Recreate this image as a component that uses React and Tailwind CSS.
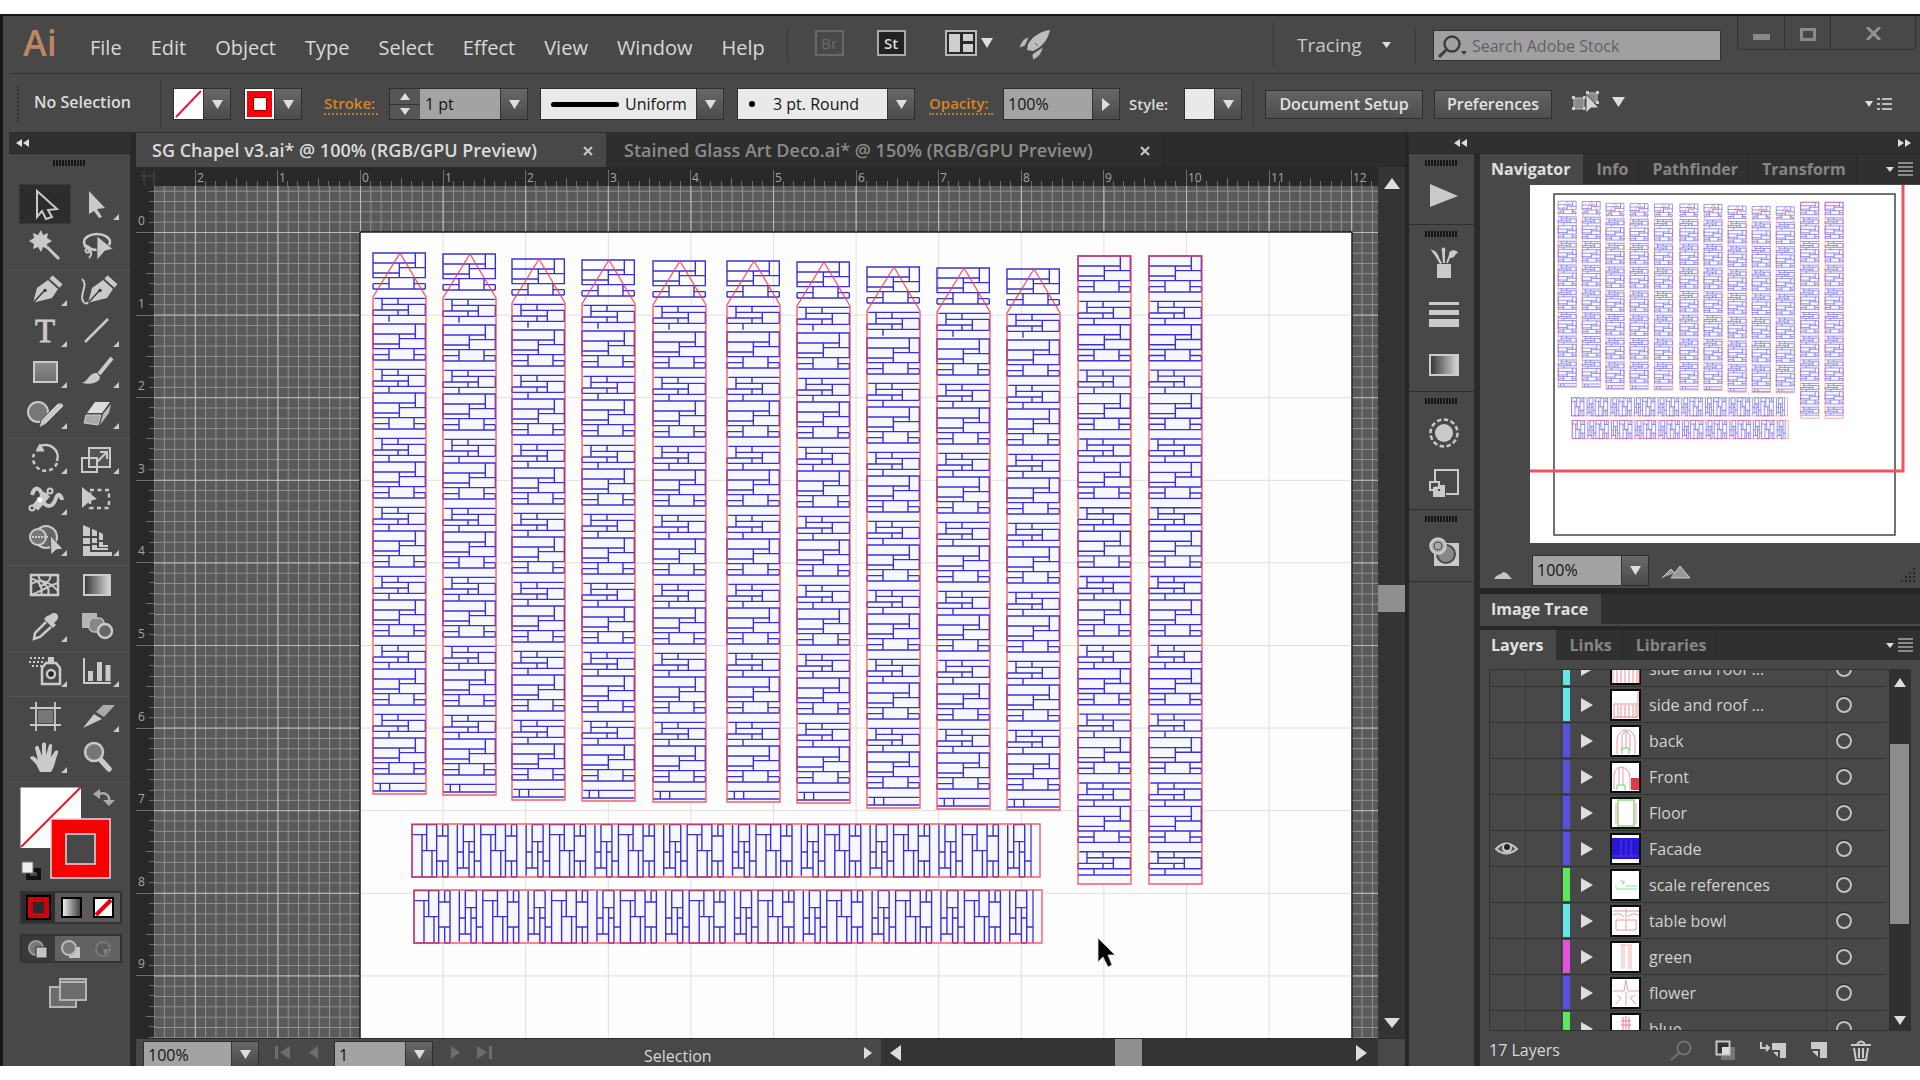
import React from "react";

/* ---------- artwork geometry ---------- */
const INCH = 82.6;

/* One repeat of the brick pattern, 157 x 207 in thirds of a pixel. */
const BRICK_TOP =
  "M0 0H157V74H0ZM127 0V44M0 30H127M79 30V74M79 44H157M0 60H79" +
  "M48 74V108M123 74V108M0 92H48M123 92H157M0 92V108M157 92V108M0 108H157";
const BRICK_LOW =
  "M4 136H157M27 136V171M75 136V154M27 154H157M106 154V187M157 154V187M0 171H106M75 171V187M0 171V187M0 187H157M48 187V206";
const BRICK_END = "M4 136H157M22 136V159M50 136V159M0 159H157";

const ROOF_COLUMNS = [
  [12, 21],
  [82, 22],
  [151, 27],
  [221, 28],
  [292, 29],
  [366, 29],
  [436, 30],
  [506, 35],
  [576, 36],
  [646, 37],
];

function Bricks({ y, end }) {
  return (
    <g transform={`translate(0 ${y}) scale(.3333)`} fill="none" stroke="#3a30d4" strokeWidth="4.2">
      <path d={BRICK_TOP} />
      <path d={end ? BRICK_END : BRICK_LOW} />
    </g>
  );
}

function RoofColumn({ x, y }) {
  return (
    <g transform={`translate(${x} ${y})`}>
      <path d="M0 44H53V541H0Z" fill="#f7f8ff" />
      <Bricks y={0} />
      {[0, 1, 2, 3, 4, 5].map((i) => (
        <Bricks key={i} y={71 + i * 69} />
      ))}
      <Bricks y={485} end />
      <path d="M27 0L0 44V541H53V44Z" fill="none" stroke="#f4434e" strokeWidth="1.4" opacity=".85" />
    </g>
  );
}

function LongColumn() {
  return (
    <g>
      <path d="M0 0H53V628H0Z" fill="#f7f8ff" />
      {[0, 1, 2, 3, 4, 5, 6, 7, 8].map((i) => (
        <Bricks key={i} y={i * 68.8} />
      ))}
      <path d="M0 619H53" stroke="#3f36d2" strokeWidth="1.3" />
      <path d="M0 0H53V628H0Z" fill="none" stroke="#f4434e" strokeWidth="1.4" opacity=".85" />
    </g>
  );
}

function Artwork() {
  return (
    <g>
      {ROOF_COLUMNS.map(([x, y]) => (
        <RoofColumn key={x} x={x} y={y} />
      ))}
      <g transform="translate(717 24)"><LongColumn /></g>
      <g transform="translate(788 24)"><LongColumn /></g>
      <g transform="translate(51 645) rotate(-90)"><LongColumn /></g>
      <g transform="translate(53 711) rotate(-90)"><LongColumn /></g>
    </g>
  );
}

function Canvas() {
  return (
    <svg className="block h-full w-full" role="img" aria-label="Artboard">
      <defs>
        <pattern id="minor" width={INCH / 8} height={INCH / 8} patternUnits="userSpaceOnUse" patternTransform="translate(206 46)">
          <path d="M0 .5H11M.5 0V11" stroke="#919191" strokeWidth="1" />
        </pattern>
        <pattern id="major" width={INCH} height={INCH} patternUnits="userSpaceOnUse" patternTransform="translate(206 46)">
          <path d="M0 .5H83M.5 0V83" stroke="#bcbcbc" strokeWidth="1" />
        </pattern>
        <pattern id="board" width={INCH} height={INCH} patternUnits="userSpaceOnUse" patternTransform="translate(206 46)">
          <path d="M0 .5H83M.5 0V83" stroke="#dedede" strokeWidth="1" />
        </pattern>
      </defs>
      <rect width="100%" height="100%" fill="#5a5a5a" />
      <rect width="100%" height="100%" fill="url(#minor)" />
      <rect width="100%" height="100%" fill="url(#major)" />
      <rect x="206" y="46" width="992" height="992" fill="#fdfdfd" stroke="#1e1e1e" strokeWidth="1.5" />
      <rect x="207" y="47" width="989" height="989" fill="url(#board)" />
      <g transform="translate(207 46)">
        <Artwork />
      </g>
      <path d="M944 752V776L949 771L954 781L958 779L954 769H961Z" fill="#050505" stroke="#ddd" strokeWidth=".8" />
    </svg>
  );
}

function HorizontalRuler() {
  const units = Array.from({ length: 15 }, (_, i) => i - 2);
  return (
    <svg className="block h-[19px] w-full bg-[#292929]">
      <path d="M4 9H18M8 3V19M18 3V19" stroke="#4d4d4d" />
      {units.map((n) => (
        <g key={n} transform={`translate(${Math.round(224 + n * INCH)} 0)`}>
          <path d="M.5 3V19M10.5 14V19M20.5 14V19M31.5 14V19M41.5 11V19M51.5 14V19M62.5 14V19M72.5 14V19" stroke="#6e6e6e" />
          <text x="2" y="15" fontSize="12" fill="#a5a5a5">{Math.abs(n)}</text>
        </g>
      ))}
    </svg>
  );
}

function VerticalRuler() {
  const units = Array.from({ length: 10 }, (_, i) => i);
  return (
    <svg className="block h-full w-[18px] shrink-0 bg-[#292929]">
      <path d="M13 5.5H18M13 15.5H18M13 25.5H18M13 36.5H18" stroke="#6e6e6e" />
      {units.map((n) => (
        <g key={n} transform={`translate(0 ${Math.round(46 + n * INCH)})`}>
          <path d="M0 .5H18M13 10.5H18M13 20.5H18M13 31.5H18M10 41.5H18M13 51.5H18M13 62.5H18M13 72.5H18" stroke="#6e6e6e" />
          <text x="2" y="-7" fontSize="12" fill="#a5a5a5">{n}</text>
        </g>
      ))}
    </svg>
  );
}

/* ---------- small shared pieces ---------- */
function Tri({ dir = "down", w = 10, h = 8, className = "" }) {
  const d = {
    down: "M0 0H10L5 8Z",
    up: "M0 8H10L5 0Z",
    left: "M10 0V8L0 4Z",
    right: "M0 0V8L10 4Z",
  }[dir];
  return (
    <svg width={w} height={h} viewBox="0 0 10 8" preserveAspectRatio="none" className={"shrink-0 fill-[#dedede] " + className}>
      <path d={d} />
    </svg>
  );
}

function Arrow({ label, dir = "down" }) {
  return (
    <button
      aria-label={label}
      className="flex h-full w-[27px] shrink-0 items-center justify-center border-l border-[#333] bg-gradient-to-b from-[#686868] to-[#4b4b4b]"
    >
      <Tri dir={dir} w={dir === "down" ? 11 : 8} h={dir === "down" ? 9 : 13} />
    </button>
  );
}

function Combo({ className, children }) {
  return <div className={"flex shrink-0 border border-[#2f2f2f] bg-[#a3a3a3] text-[#151515] " + className}>{children}</div>;
}

function Grip() {
  return (
    <svg width="34" height="6" className="mx-auto block">
      <path d="M1 0V6M4 0V6M7 0V6M10 0V6M13 0V6M16 0V6M19 0V6M22 0V6M25 0V6M28 0V6M31 0V6" stroke="#161616" strokeWidth="2" />
    </svg>
  );
}

function Chevrons({ right, label }) {
  return (
    <button aria-label={label} className="flex gap-px">
      <Tri dir={right ? "right" : "left"} w={6} h={8} className="fill-[#b5b5b5]" />
      <Tri dir={right ? "right" : "left"} w={6} h={8} className="fill-[#b5b5b5]" />
    </button>
  );
}

function PanelMenu({ label }) {
  return (
    <button aria-label={label} className="ml-auto mr-[7px] flex h-[15px] items-center gap-1 text-[#a9a9a9]">
      <Tri w={8} h={5} className="fill-[#c0c0c0]" />
      <svg width="15" height="14" stroke="currentColor" strokeWidth="1.5">
        <path d="M0 1H15M0 5H15M0 9H15M0 13H15" />
      </svg>
    </button>
  );
}

const VLine = ({ className }) => <div className={"w-px shrink-0 bg-[#383838] " + className} />;

/* ---------- top bars ---------- */
const MENUS = ["File", "Edit", "Object", "Type", "Select", "Effect", "View", "Window", "Help"];

function MenuBar() {
  return (
    <header className="flex h-[58px] shrink-0 items-center border-b border-[#333] pr-1">
      <div className="w-[81px] shrink-0 pb-1 pl-[14px] text-[36px] leading-10 font-semibold text-[#bd8660]">Ai</div>
      <nav className="flex gap-[29px] pt-[6px] text-[20px] text-[#d8d8d8]">
        {MENUS.map((m) => (
          <button key={m}>{m}</button>
        ))}
      </nav>
      <VLine className="ml-[22px] h-9" />
      <button className="mb-1 ml-[27px] h-[26px] w-[29px] border-2 border-[#686868] text-[15px] leading-5 text-[#6b6b6b]">Br</button>
      <button className="mb-1 ml-[33px] h-[26px] w-[29px] border-2 border-[#aaa] bg-[#222] text-[15px] leading-5 font-semibold text-[#ddd]">St</button>
      <button aria-label="Arrange documents" className="mb-1 ml-[39px] flex items-center gap-1">
        <svg width="32" height="26">
          <path d="M1 1H31V25H1Z" fill="#2a2a2a" stroke="#b9b9b9" strokeWidth="2" />
          <path d="M4 4H15V22H4ZM18 4H28V11H18ZM18 14H28V22H18Z" fill="#cfcfcf" />
        </svg>
        <Tri w={12} h={10} />
      </button>
      <button aria-label="GPU performance" className="ml-[26px]">
        <svg width="32" height="30" fill="#bdbdbd">
          <path d="M31 0C22 1 14 6 9 14L8 20L14 21C23 17 29 10 31 0Z" />
          <path d="M10 7C5 8 2 12 0 18L6 16ZM24 17C20 20 15 22 13 25L14 30C20 27 23 23 24 17ZM16 13L19 16" stroke="#4a4a4a" strokeWidth=".8" />
        </svg>
      </button>
      <div className="ml-auto flex h-full items-center">
        <VLine className="h-11" />
        <label className="ml-[23px] flex items-center pt-px">
          <select aria-label="Workspace" className="w-[85px] appearance-none bg-transparent text-[19px] text-[#c9c9c9]">
            <option>Tracing</option>
          </select>
          <Tri w={9} h={6} />
        </label>
        <VLine className="ml-6 h-9" />
        <div className="mt-[2px] ml-[17px] flex h-[31px] w-[288px] items-center border border-[#333] bg-[#a19fa2]">
          <svg width="36" height="28" fill="none" stroke="#3c3c3c" strokeWidth="2.4">
            <circle cx="18" cy="12" r="7.5" />
            <path d="M12 18L5 25" strokeWidth="3" />
            <path d="M27 19H33L30 23Z" fill="#3c3c3c" stroke="none" />
          </svg>
          <input aria-label="Search Adobe Stock" placeholder="Search Adobe Stock" className="w-full bg-transparent pl-[6px] text-[16px] outline-none placeholder:text-[#636066]" />
        </div>
        <div className="ml-4 flex h-[34px] self-start rounded-b border border-t-0 border-[#333]">
          <button aria-label="Minimize" className="flex w-[47px] items-center justify-center border-r border-[#333] pt-2">
            <span className="h-[6px] w-[17px] bg-[#8a8a8a]" />
          </button>
          <button aria-label="Maximize" className="flex w-[46px] items-center justify-center border-r border-[#333] pt-1">
            <span className="h-[13px] w-[16px] border-3 border-[#8a8a8a]" />
          </button>
          <button aria-label="Close" className="flex w-[84px] items-center justify-center pt-px">
            <svg width="15" height="13" stroke="#929292" strokeWidth="3"><path d="M1 0L14 13M14 0L1 13" /></svg>
          </button>
        </div>
      </div>
    </header>
  );
}

function ControlBar() {
  return (
    <div className="flex h-[59px] shrink-0 items-center border-b border-[#2c2c2c] pt-[2px] text-[15px]">
      <div className="ml-2 h-9 w-0 border-l-2 border-dotted border-[#333]" />
      <span className="ml-[15px] w-[126px] shrink-0 pb-1 text-[16px] font-semibold text-[#dcdcdc]">No Selection</span>
      <VLine className="h-12" />
      <Combo className="ml-[12px] h-8 w-[58px]">
        <button aria-label="Fill" className="flex-1 bg-white">
          <svg width="29" height="30"><path d="M2 28L27 2" stroke="#d81f3a" strokeWidth="2" /></svg>
        </button>
        <Arrow label="Fill options" />
      </Combo>
      <Combo className="ml-[13px] h-8 w-[58px]">
        <button aria-label="Stroke" className="flex flex-1 items-center justify-center border-2 border-white bg-[#f80008]">
          <span className="h-[12px] w-[12px] border-2 border-[#eee] bg-[#fff] outline outline-[#800]" />
        </button>
        <Arrow label="Stroke options" />
      </Combo>
      <a href="#stroke" className="ml-[22px] w-[54px] shrink-0 border-b-2 border-dotted border-[#c77b21] leading-5 font-semibold text-[#d98524]">Stroke:</a>
      <Combo className="ml-[11px] h-8 w-[139px]">
        <div className="flex w-[30px] shrink-0 flex-col bg-[#565656]">
          <button aria-label="Increase stroke" className="flex flex-1 items-center justify-center border-b border-[#333]"><Tri dir="up" w={10} h={7} /></button>
          <button aria-label="Decrease stroke" className="flex flex-1 items-center justify-center"><Tri w={10} h={7} /></button>
        </div>
        <input aria-label="Stroke weight" defaultValue="1 pt" className="w-full min-w-0 flex-1 bg-transparent px-[5px] text-[16px] outline-none" />
        <Arrow label="Stroke weight options" />
      </Combo>
      <Combo className="ml-[12px] h-8 w-[184px] items-center bg-[#e9e9e9]">
        <span className="ml-[10px] h-[5px] w-[68px] shrink-0 rounded-sm bg-black" />
        <select aria-label="Width profile" className="w-full min-w-0 flex-1 appearance-none pl-[6px] text-[16px]">
          <option>Uniform</option>
        </select>
        <Arrow label="Width profile options" />
      </Combo>
      <Combo className="ml-[13px] h-8 w-[178px] items-center bg-[#e9e9e9]">
        <span className="ml-[11px] h-[6px] w-[6px] shrink-0 rounded-full bg-black" />
        <select aria-label="Brush definition" className="w-full min-w-0 flex-1 appearance-none pl-[18px] text-[16px]">
          <option>3 pt. Round</option>
        </select>
        <Arrow label="Brush options" />
      </Combo>
      <a href="#opacity" className="ml-[14px] w-[64px] shrink-0 border-b-2 border-dotted border-[#c77b21] leading-5 font-semibold text-[#d98524]">Opacity:</a>
      <Combo className="ml-[10px] h-8 w-[117px]">
        <input aria-label="Opacity" defaultValue="100%" className="w-full min-w-0 flex-1 bg-transparent px-1 text-[16px] outline-none" />
        <Arrow label="Opacity options" dir="right" />
      </Combo>
      <span className="ml-[9px] w-[45px] shrink-0 font-semibold text-[#dcdcdc]">Style:</span>
      <Combo className="ml-[10px] h-8 w-[58px]">
        <button aria-label="Graphic style" className="flex-1 bg-[#e9e9e9]" />
        <Arrow label="Graphic style options" />
      </Combo>
      <VLine className="ml-[11px] h-12" />
      <button className="ml-[11px] h-[29px] w-[158px] shrink-0 border border-[#2f2f2f] bg-gradient-to-b from-[#636363] to-[#4e4e4e] text-[16px] leading-6 font-semibold text-[#e2e2e2]">Document Setup</button>
      <button className="ml-[11px] h-[29px] w-[118px] shrink-0 border border-[#2f2f2f] bg-gradient-to-b from-[#636363] to-[#4e4e4e] text-[16px] leading-6 font-semibold text-[#e2e2e2]">Preferences</button>
      <button aria-label="Select similar objects" className="ml-[19px] flex shrink-0 items-center gap-[11px] pb-1">
        <svg width="30" height="24">
          <path d="M3 8H13V19H3ZM16 3H26V12H16Z" fill="#8a8a8a" stroke="#bbb" />
          <path d="M1 6h3v3H1zM12 6h3v3h-3zM1 17h3v3H1zM12 17h3v3h-3zM15 1h3v3h-3zM25 1h3v3h-3zM25 11h3v3h-3z" fill="#cfcfcf" />
          <path d="M15 4V23L20 18L28 18Z" fill="#d5d5d5" stroke="#4a4a4a" />
        </svg>
        <Tri w={13} h={10} />
      </button>
      <button aria-label="Control panel menu" className="mr-[28px] ml-auto flex items-center gap-1">
        <Tri w={8} h={6} />
        <svg width="15" height="13" stroke="#bdbdbd" strokeWidth="2"><path d="M0 1H3M5 1H15M0 6H3M5 6H15M0 11H3M5 11H15" /></svg>
      </button>
    </div>
  );
}

/* ---------- tools ---------- */
const L = "#cacaca";
const nib = (
  <g>
    <path d="M13 32L17 17L28 9L38 18L32 27L16 31Z" fill={L} />
    <path d="M31 6L41 15" stroke={L} strokeWidth="4.5" />
    <path d="M13 32L24 20" stroke="#3d3d3d" strokeWidth="1.6" />
    <circle cx="25" cy="19.500" r="1.800" fill="#3d3d3d" />
  </g>
);

const TOOL_GROUPS = [
  [
    ["Selection", <path d="M17 6L37 24L28 25L32 32L26 34L22 26L17 32Z" fill="#2c2c2c" stroke={L} strokeWidth="2" />],
    ["Direct Selection", <path d="M17 6L33 23L25 24L30 32L27 33L22 26L17 29Z" fill={L} />, 1],
    ["Magic Wand", <g><path d="M21 4L23 9L28 7L27 12L32 15L27 18L28 23L23 21L21 26L18 21L13 23L14 18L9 15L14 12L13 7L18 9Z" fill={L} /><path d="M27 21L39 33" stroke={L} strokeWidth="3" /></g>],
    ["Lasso", <g><ellipse cx="25" cy="16" rx="13" ry="8" fill="none" stroke={L} strokeWidth="2.500" /><path d="M12 21C17 18 20 23 17 26C13 28 12 22 16 23C20 25 20 29 17 32" fill="none" stroke={L} strokeWidth="2" /><path d="M25 10L41 23L33 25L25 34Z" fill={L} stroke="#484848" strokeWidth=".8" /></g>],
  ],
  [
    ["Pen", nib, 1],
    ["Curvature", <g><g transform="translate(3 0)">{nib}</g><path d="M10 8C17 14 7 23 11 30C12 33 15 33 16 31" fill="none" stroke={L} strokeWidth="2" /></g>],
    ["Type", <text x="25" y="30" textAnchor="middle" fontSize="33" fill={L} stroke={L} strokeWidth=".8" style={{ fontFamily: "Liberation Serif" }}>T</text>, 1],
    ["Line", <path d="M13 30L36 7" stroke={L} strokeWidth="2.500" />, 1],
    ["Rectangle", <path d="M14 9H37V29H14Z" fill="url(#tg)" stroke={L} strokeWidth="2" />, 1],
    ["Paintbrush", <g><path d="M40 5L27 21" stroke={L} strokeWidth="4" /><path d="M25 20L28 24C28 30 18 32 10 30C17 28 16 20 25 20Z" fill={L} /></g>, 1],
    ["Shaper", <g><circle cx="18" cy="18" r="10" fill="#777" stroke={L} strokeWidth="2" /><path d="M42 9L44 12L26 30L19 34L21 26L38 9Z" fill={L} stroke="#484848" /></g>, 1],
    ["Eraser", <g><path d="M23 8H38L30 19H15Z" fill="#dcdcdc" /><path d="M14 21H29L26 31L12 29Z" fill="#aaa" stroke={L} /><path d="M31 20L39 10L37 19L28 31Z" fill="#bbb" /></g>, 1],
  ],
  [
    ["Rotate", <g><path d="M19 8A12 12 0 0 1 37 22" fill="none" stroke={L} strokeWidth="2.500" /><path d="M37 24A12 12 0 0 1 14 15" fill="none" stroke={L} strokeWidth="2.500" strokeDasharray="4 3" /><path d="M16 12L20 5L24 12Z" fill={L} stroke={L} /></g>, 1],
    ["Scale", <g fill="none" stroke={L} strokeWidth="2"><path d="M17 9H38V28H17Z" fill="#555" /><path d="M10 19H25V33H10Z" /><path d="M25 23L35 13M28 13H35V20" /></g>, 1],
    ["Width", <g fill="none" stroke={L}><path d="M12 15C15 4 21 9 22 16C24 30 33 28 36 18C39 10 42 19 42 20" strokeWidth="4" /><path d="M15 28L27 14" strokeWidth="8" /><path d="M13 28L30 11" strokeWidth="2" /><circle cx="12" cy="28" r="2.500" fill="#484848" strokeWidth="2" /><circle cx="30" cy="11" r="2.500" fill="#484848" strokeWidth="2" /><circle cx="20" cy="20" r="3" fill="#fff" /></g>, 1],
    ["Free Transform", <g><path d="M10 7L25 19L18 21L10 28Z" fill={L} /><path d="M18 10H37V28H18Z" fill="none" stroke={L} strokeWidth="2.500" strokeDasharray="4 3.500" /></g>],
    ["Shape Builder", <g><circle cx="26" cy="16" r="11" fill="#666" stroke={L} strokeWidth="2" /><circle cx="18" cy="16" r="8" fill="#777" stroke={L} strokeWidth="2" /><path d="M12 16H28" stroke={L} strokeWidth="2" strokeDasharray="2 1" /><path d="M30 14L43 28L36 29L31 34Z" fill={L} stroke="#484848" /></g>, 1],
    ["Perspective Grid", <g fill={L}><path d="M11 4L18 7V15H11ZM20 8L25 10V15H20ZM27 11L31 13V19H27ZM11 17H18V23H11ZM20 17H25V22H20ZM11 25H18V31H40V35H11ZM20 24H25V27H36V29H20ZM27 21H31V24H36V26H27Z" /></g>, 1],
  ],
  [
    ["Mesh", <g fill="none" stroke={L} strokeWidth="2"><path d="M11 9H38V29H11Z" strokeWidth="2.500" /><path d="M11 18C18 14 26 12 38 25M11 29C22 25 30 19 38 17M19 9C16 16 32 17 28 29M30 9C32 13 25 20 19 20M11 13C20 13 23 24 21 29" /></g>],
    ["Gradient", <path d="M12 9H38V29H12Z" fill="url(#tool-gradient)" stroke={L} strokeWidth="2" />],
    ["Eyedropper", <g><path d="M30 8C34 3 41 8 37 13L34 16L36 18L33 21L24 12L27 9Z" fill={L} /><path d="M26 15L15 26L14 32L20 30L31 20" fill="none" stroke={L} strokeWidth="2.500" /></g>, 1],
    ["Blend", <g><path d="M10 6H25V21H10Z" fill="#b5b5b5" /><rect x="17" y="11" width="15" height="14" rx="5" fill="#888" stroke="#bbb" strokeWidth="1.500" /><circle cx="33" cy="24" r="7" fill="#666" stroke={L} strokeWidth="2.500" /></g>],
  ],
  [
    ["Symbol Sprayer", <g><path d="M10 6H24M9 10H25M12 14H22" stroke={L} strokeWidth="2" strokeDasharray="2 2" /><path d="M28 5H34V10H28Z" fill={L} /><path d="M22 32V16L26 11H36L40 16V32Z" fill="none" stroke={L} strokeWidth="2.500" /><circle cx="31" cy="22" r="4" fill="#222" stroke={L} strokeWidth="2.500" /></g>, 1],
    ["Column Graph", <g fill="none" stroke={L}><path d="M12 6V31H39" strokeWidth="2" /><path d="M18.500 19V29M27.500 10V29M36 13V29" strokeWidth="5" /></g>, 1],
  ],
  [
    ["Artboard", <g fill="none" stroke={L} strokeWidth="1.800"><path d="M16 5V34M35 5V34M10 11H41M10 28H41" /><path d="M18 13H33V26H18Z" fill="#777" stroke="none" /></g>],
    ["Slice", <g fill={L}><path d="M11 31L22 17L30 22Z" /><path d="M24 15L31 8H43L32 20Z" fill="#aaa" /></g>, 1],
    ["Hand", <path d="M20 34L16 26L10 20C11 17 15 18 18 22L15 10C16 7 19 7 19 10L22 18V6C23 4 26 4 26 6V17L29 7C30 5 33 6 32 9L31 19L35 13C37 11 39 13 38 15C35 23 35 28 31 34Z" fill={L} />, 1],
    ["Zoom", <g><path d="M28 21L37 31" stroke={L} strokeWidth="5.500" strokeLinecap="round" /><circle cx="22" cy="14" r="9" fill="#777" stroke={L} strokeWidth="2.500" /></g>],
  ],
];

function Tool({ name, icon, more, active }) {
  return (
    <button aria-label={name} className={"h-[38px] w-[50px] " + (active ? "bg-[#2c2c2c] outline outline-[#3a3a3a]" : "")}>
      <svg width="50" height="38" viewBox="0 0 50 38">
        {icon}
        {more ? <path d="M47 29V35H41Z" fill={L} /> : null}
      </svg>
    </button>
  );
}

function ToolPanel() {
  return (
    <aside className="flex w-[127px] shrink-0 flex-col border-r-6 border-[#292929] bg-[#484848]">
      <svg width="0" height="0" className="absolute">
        <defs>
          <linearGradient id="tg" x2="0" y2="1"><stop stopColor="#8c8c8c" /><stop offset="1" stopColor="#707070" /></linearGradient>
          <linearGradient id="tool-gradient"><stop stopColor="#333" /><stop offset="1" stopColor="#d8d8d8" /></linearGradient>
        </defs>
      </svg>
      <div className="flex h-[21px] shrink-0 items-center border-b border-[#262626] bg-[#303030] pl-[7px]">
        <Chevrons label="Collapse tools" />
      </div>
      <div className="pt-[6px] pb-[19px]"><Grip /></div>
      {TOOL_GROUPS.map((group, g) => (
        <div key={g} className="border-b border-[#535353] pb-[3px]">
          <div className="grid grid-cols-[50px_50px] gap-x-[2px] gap-y-[3px] pb-[3px] pl-[11px]">
            {group.map(([name, icon, more]) => (
              <Tool key={name} name={name} icon={icon} more={more} active={name === "Selection"} />
            ))}
          </div>
        </div>
      ))}
      <div className="pt-[4px] pl-[11px]">
        <svg width="102" height="94" role="img" aria-label="Fill and stroke colors">
          <path d="M.5.5H61V61H.5Z" fill="#fff" />
          <path d="M1 60L61 0" stroke="#d81f26" strokeWidth="2" />
          <path d="M31 32H90V91H31Z" fill="#f80000" stroke="#ddd" strokeWidth="1.500" />
          <path d="M46 47V77H75V47Z" fill="#484848" stroke="#ddd" strokeWidth="1.500" />
          <path d="M77 8C85 4 90 8 89 14" fill="none" stroke="#aaa" strokeWidth="2.500" />
          <path d="M73 7L80 2V12ZM83 13H95L89 19Z" fill="#aaa" />
          <path d="M8 83H19V91H8Z" fill="none" stroke="#111" strokeWidth="4" />
          <path d="M2 75H13V86H2Z" fill="#eee" stroke="#777" />
        </svg>
      </div>
      <div className="mt-[10px] ml-[11px] flex h-[33px] w-[102px] shrink-0 border-2 border-[#333] bg-[#5a5a5a]">
        <button aria-label="Color" className="flex flex-1 items-center justify-center bg-[#2c2c2c]"><span className="h-[21px] w-[21px] border-5 border-[#d00010] outline-2 outline-black" /></button>
        <button aria-label="Gradient fill" className="flex flex-1 items-center justify-center"><span className="h-[21px] w-[21px] border-2 border-black bg-gradient-to-r from-[#eee] to-[#444]" /></button>
        <button aria-label="None" className="flex flex-1 items-center justify-center"><svg width="21" height="21"><path d="M1 1H20V20H1Z" fill="#fff" stroke="#000" strokeWidth="2" /><path d="M3 18L18 3" stroke="#e00010" strokeWidth="4" /></svg></button>
      </div>
      <div className="mt-[10px] ml-[11px] flex h-[29px] w-[102px] shrink-0 border-2 border-[#333] bg-[#626262]">
        <button aria-label="Draw normal" className="flex flex-1 items-center justify-center bg-[#3a3a3a]"><svg width="22" height="20"><circle cx="9" cy="9" r="7" fill="#777" stroke="#999" strokeWidth="2" /><path d="M9 8H20V19H9Z" fill="#c5c5c5" stroke="#333" /></svg></button>
        <button aria-label="Draw behind" className="flex flex-1 items-center justify-center"><svg width="22" height="20"><path d="M9 8H20V19H9Z" fill="#c5c5c5" /><circle cx="9" cy="9" r="7" fill="#777" stroke="#bbb" strokeWidth="2" /></svg></button>
        <button aria-label="Draw inside" className="flex flex-1 items-center justify-center"><svg width="22" height="20"><circle cx="10" cy="10" r="7" fill="#5a5a5a" stroke="#777" strokeWidth="2" /><path d="M10 10H16L12 16Z" fill="#808080" /></svg></button>
      </div>
      <button aria-label="Change screen mode" className="mt-[15px] ml-[40px] h-[30px] w-[38px]">
        <svg width="38" height="30" fill="#6c6c6c" stroke="#b5b5b5" strokeWidth="2"><path d="M1 9H27V29H1Z" /><path d="M11 1H37V22H11Z" /><path d="M12 4H36" /></svg>
      </button>
    </aside>
  );
}

/* ---------- document ---------- */
function CloseX({ label, className }) {
  return (
    <button aria-label={label} className={className}>
      <svg width="10" height="10" stroke="#c5c5c5" strokeWidth="2.200"><path d="M1 1L9 9M9 1L1 9" /></svg>
    </button>
  );
}

function DocumentArea() {
  return (
    <main className="flex min-w-0 flex-1 flex-col bg-[#2c2c2c]">
      <div className="flex h-[34px] shrink-0 items-center text-[18px] font-semibold whitespace-nowrap" role="tablist">
        <div className="flex h-full w-[470px] items-center bg-[#484848] pt-px pl-4">
          <button role="tab" aria-selected="true" className="w-[431px] text-left text-[#dcdcdc]">SG Chapel v3.ai* @ 100% (RGB/GPU Preview)</button>
          <CloseX label="Close SG Chapel" />
        </div>
        <div className="flex h-full w-[558px] items-center border-r border-[#242424] bg-[#2e2e2e] pt-px pl-[18px]">
          <button role="tab" aria-selected="false" className="w-[516px] text-left text-[#8b8b8b]">Stained Glass Art Deco.ai* @ 150% (RGB/GPU Preview)</button>
          <CloseX label="Close Stained Glass" />
        </div>
      </div>
      <div className="flex min-h-0 flex-1">
        <div className="flex min-w-0 flex-1 flex-col">
          <HorizontalRuler />
          <div className="flex min-h-0 flex-1">
            <VerticalRuler />
            <div className="min-w-0 flex-1"><Canvas /></div>
          </div>
        </div>
        <div className="flex w-[27px] shrink-0 flex-col items-center justify-between bg-[#343434] pt-[11px] pb-[10px]">
          <Tri dir="up" w={16} h={11} />
          <div className="mb-[10px] h-[27px] w-full bg-[#8f8f8f]" />
          <Tri w={16} h={10} />
        </div>
      </div>
      <div className="flex h-[28px] shrink-0 items-end border-t border-[#2c2c2c] bg-[#484848] text-[16px]">
        <Combo className="ml-[7px] h-[25px] w-[116px] border-b-0">
          <input aria-label="Zoom level" defaultValue="100%" className="w-full min-w-0 flex-1 bg-transparent pt-[2px] pl-1 outline-none" />
          <Arrow label="Zoom level options" />
        </Combo>
        <div className="ml-[16px] flex w-[59px] items-center justify-between self-center pr-[16px]">
          <button aria-label="First artboard"><svg width="15" height="13" fill="#6d6d6d"><path d="M0 0H3V13H0ZM15 0V13L5 6.500Z" /></svg></button>
          <button aria-label="Previous artboard"><svg width="9" height="13" fill="#6d6d6d"><path d="M9 0V13L0 6.500Z" /></svg></button>
        </div>
        <Combo className="h-[25px] w-[99px] border-b-0">
          <input aria-label="Artboard number" defaultValue="1" className="w-full min-w-0 flex-1 bg-transparent pt-[2px] pl-1 outline-none" />
          <Arrow label="Artboard options" />
        </Combo>
        <div className="ml-[18px] flex w-[56px] items-center gap-[17px] self-center">
          <button aria-label="Next artboard"><svg width="9" height="13" fill="#6d6d6d"><path d="M0 0V13L9 6.500Z" /></svg></button>
          <button aria-label="Last artboard"><svg width="15" height="13" fill="#6d6d6d"><path d="M12 0H15V13H12ZM0 0V13L10 6.500Z" /></svg></button>
        </div>
        <span className="ml-[137px] flex-none self-end leading-5 text-[#d8d8d8]">Selection</span>
        <button aria-label="Status options" className="mr-[9px] ml-[152px] self-center"><Tri dir="right" w={8} h={12} /></button>
        <div className="flex h-full min-w-0 flex-1 items-center justify-between bg-[#343434] pr-[11px] pl-[9px]">
          <Tri dir="left" w={11} h={16} />
          <div className="h-full w-[27px] bg-[#8f8f8f]" />
          <Tri dir="right" w={11} h={16} />
        </div>
        <div className="w-[27px] shrink-0" />
      </div>
    </main>
  );
}

/* ---------- icon dock ---------- */
const DOCK = [
  { h: "h-[71px]", pad: "pt-[2px]", items: [["Actions", <path d="M4 6L32 18L4 29Z" fill={L} />]] },
  {
    h: "h-[167px]",
    pad: "pb-px",
    items: [
      ["Brushes", <g fill={L}><path d="M11 19H25V33H11Z" /><path d="M14 19L8 9C4 5 5 3 6 5C12 6 12 12 16 18ZM17 18L16 7C14 1 21 1 19 7L19 18ZM20 18L23 10C22 4 31 4 32 8C28 9 30 13 24 13L22 18Z" /></g>],
      ["Stroke", <path d="M3 6H33V9H3ZM3 14H33V19H3ZM3 23H33V31H3Z" fill={L} />],
      ["Gradient", <path d="M4 8H32V28H4Z" fill="url(#tool-gradient)" stroke={L} strokeWidth="2" />],
    ],
  },
  {
    h: "h-[118px]",
    pad: "pt-[3px]",
    items: [
      ["Appearance", <g><circle cx="18" cy="18" r="9" fill={L} /><circle cx="18" cy="18" r="13.500" fill="none" stroke={L} strokeWidth="2.500" strokeDasharray="4.500 2.500" /></g>],
      ["Graphic Styles", <g fill="none" stroke={L} strokeWidth="2"><path d="M9 15V4H32V28H20" /><path d="M4 16H13V24H4Z" /><path d="M8 21V30H18V20H14" fill={L} /><path d="M11 22H15V26H11Z" fill="#484848" /></g>],
    ],
  },
  {
    h: "h-[72px]",
    pad: "pb-px",
    items: [["Symbols", <g><path d="M8 10H33V33H8Z" fill={L} /><circle cx="20" cy="21" r="9" fill="#888" stroke="#484848" strokeWidth="2" /><circle cx="12" cy="13" r="7.500" fill="#aaa" stroke={L} strokeWidth="2.500" /><circle cx="12" cy="13" r="4" fill="none" stroke="#484848" /></g>]],
  },
];

function IconDock() {
  return (
    <div className="flex w-[65px] shrink-0 flex-col">
      {DOCK.map((s, i) => (
        <div key={i} className={"flex flex-col border-b border-[#303030] pt-[6px] " + s.h}>
          <Grip />
          <div className={"flex flex-1 flex-col items-center justify-around pl-[5px] " + s.pad}>
            {s.items.map(([name, icon]) => (
              <button key={name} aria-label={name} className="h-9 w-9">
                <svg width="36" height="36">{icon}</svg>
              </button>
            ))}
          </div>
        </div>
      ))}
    </div>
  );
}

/* ---------- right panels ---------- */
function Tabs({ tabs, menu }) {
  return (
    <div className="flex h-[30px] shrink-0 items-center bg-[#303030] text-[16px] font-bold text-[#858585]" role="tablist">
      {tabs.map((t, i) => (
        <button
          key={t}
          role="tab"
          aria-selected={i === 0}
          className={"h-full pb-px " + (i === 0 ? "bg-[#484848] pr-[13px] pl-[11px] text-[#e0e0e0]" : "border-r border-[#282828] pr-[10px] pl-[13px]")}
        >
          {t}
        </button>
      ))}
      {menu ? <PanelMenu label={menu} /> : null}
    </div>
  );
}

function NavigatorPanel() {
  return (
    <section>
      <Tabs tabs={["Navigator", "Info", "Pathfinder", "Transform"]} menu="Navigator menu" />
      <div className="pt-px pl-[50px]">
        <svg className="block h-[358px] w-full bg-white" role="img" aria-label="Navigator preview">
          <rect x="24" y="9" width="341" height="341" fill="#fff" stroke="#444" strokeWidth="1.500" />
          <g transform="translate(24 9) scale(.344)"><Artwork /></g>
          <path d="M0 286H373V0" fill="none" stroke="#f2535f" strokeWidth="3" />
        </svg>
      </div>
      <div className="flex h-[45px] items-center pt-[9px]">
        <button aria-label="Zoom out" className="mt-2 ml-[14px]"><svg width="18" height="9" fill="#c5c5c5"><path d="M0 9C3 4 6 5 8 3C11 0 14 5 18 9Z" /></svg></button>
        <Combo className="ml-[20px] h-[31px] w-[117px] text-[16px]">
          <input aria-label="Navigator zoom" defaultValue="100%" className="w-full min-w-0 flex-1 bg-transparent pl-1 outline-none" />
          <Arrow label="Navigator zoom options" />
        </Combo>
        <button aria-label="Zoom in" className="mt-1 ml-[12px]"><svg width="30" height="14" fill="#999" stroke="#c8c8c8"><path d="M1 13L10 4L14 8M10 13L19 1L29 13Z" /></svg></button>
        <svg width="16" height="17" className="mt-auto mr-1 mb-1 ml-auto"><path d="M14 1V17M10 5V17M6 9V17M2 13V17" stroke="#262626" strokeWidth="2" strokeDasharray="2 2" /></svg>
      </div>
    </section>
  );
}

const LAYERS = [
  ["side and roof ...", "#62e7e4", <path d="M0 11H28M1 1V28M27 1V28M5 12V28M9 12V28M13 12V28M17 12V28M21 12V28M25 12V28" stroke="#f08c96" />],
  ["side and roof ...", "#62e7e4", <path d="M2 13H26M2 13V28M26 1V26M6 14V27M9 14V27M13 14V27M17 14V27M21 14V27M24 14V27M2 26H26" stroke="#f08c96" />],
  ["back", "#5a4fe0", <g><path d="M5 27V12Q7 4 14 3Q22 4 23 12V27M10 24V8L14 4L18 8V24M14 4V22" stroke="#ee9aa2" /><path d="M10 27V21H17V27" stroke="#69d36d" /></g>],
  ["Front", "#5a4fe0", <g><path d="M2 26V12Q3 5 9 4Q17 5 18 14V26M7 4V22M11 4V22" stroke="#ee9aa2" /><path d="M19 15H27V27H19Z" fill="#e33a49" /><path d="M5 27V22H13V27" stroke="#69d36d" /></g>],
  ["Floor", "#5a4fe0", <g><path d="M6 1H22V27H6Z" stroke="#8fdc7c" strokeWidth="1.500" /><path d="M4 4V25M24 4V25" stroke="#eba0a0" /></g>],
  ["Facade", "#5a4fe0", <g><path d="M0 3H27V24H0Z" fill="#2a17d6" /><path d="M9 4V21M14 4V21M19 4V21M0 21H26" stroke="#4a3ce6" /></g>],
  ["scale references", "#5be85b", <path d="M4 14V17M8 10H11V14M12 10V13M4 18H25M14 15H26" stroke="#8de79b" />],
  ["table bowl", "#62e7e4", <path d="M1 4H27M1 8Q8 5 12 10M27 8Q20 5 16 10M14 1V12M4 13H24V23H4ZM14 13V23" stroke="#f19ca6" />],
  ["green", "#e352dd", <path d="M10 2V26M12 2V26M17 2V26M19 2V26M8 2H20" stroke="#f3b3bb" />],
  ["flower", "#5a4fe0", <path d="M14 1L12 12H1M14 1L16 12H27M5 16L9 19L4 25M23 16L18 19L24 25M14 13V27" stroke="#f19ca6" />],
  ["blue", "#5be85b", <path d="M11 2V27M14 1V27M17 2V27M9 6H19M9 10H19" stroke="#ef7a88" />],
];

function LayerRow({ name, color, art, visible }) {
  return (
    <li className="flex h-9 shrink-0 items-center border-b border-[#323232] text-[16px] text-[#d2d2d2]">
      <button aria-label={"Toggle visibility of " + name} className="flex h-full w-9 shrink-0 items-center justify-center border-r border-[#3a3a3a] pr-[2px]">
        {visible ? (
          <svg width="24" height="18"><path d="M1 9Q11 -2 22 9Q11 18 1 9Z" fill="#555" stroke="#c8c8c8" strokeWidth="2" /><circle cx="12" cy="8" r="5" fill="#c8c8c8" /><circle cx="12" cy="7" r="3" fill="#222" /></svg>
        ) : null}
      </button>
      <span className="h-full w-9 shrink-0 border-r border-[#3a3a3a]" />
      <svg width="9" height="35" className="shrink-0"><path d="M1 1H8V34H1Z" fill={color} /></svg>
      <button aria-label={"Expand " + name} className="ml-[10px]"><Tri dir="right" w={12} h={14} /></button>
      <svg width="31" height="32" viewBox="0 0 31 32" fill="none" className="ml-[17px] shrink-0 bg-[#0c0c0c]">
        <g transform="translate(2 2)"><path d="M0 0H27V28H0Z" fill="#fff" />{art}</g>
      </svg>
      <span className="ml-[8px] min-w-0 flex-1 truncate">{name}</span>
      <span className="flex h-full w-[61px] shrink-0 items-center border-l border-[#3a3a3a] pl-[9px]">
        <button aria-label={"Target " + name} className="h-[16px] w-[16px] rounded-full border-2 border-[#c0c0c0] shadow-[0_-1px_1px_#222]" />
      </span>
    </li>
  );
}

function LayersPanel() {
  return (
    <section className="flex min-h-0 flex-1 flex-col">
      <Tabs tabs={["Layers", "Links", "Libraries"]} menu="Layers menu" />
      <div className="mx-[9px] mt-[9px] flex min-h-0 flex-1 overflow-hidden border border-[#323232]">
        <ul className="-mt-5 flex min-w-0 flex-1 flex-col pt-px pr-[2px]">
          {LAYERS.map(([name, color, art], i) => (
            <LayerRow key={i} name={name} color={color} art={art} visible={name === "Facade"} />
          ))}
        </ul>
        <div className="flex w-[21px] shrink-0 flex-col items-center bg-[#303030] pt-[8px] pb-[5px]">
          <Tri dir="up" w={12} h={9} />
          <div className="mt-[57px] h-[180px] w-[19px] bg-[#8c8c8c]" />
          <Tri w={12} h={9} className="mt-auto" />
        </div>
      </div>
      <div className="flex h-[35px] shrink-0 items-center pt-[3px] pr-[49px] pl-[9px] text-[16px] text-[#d8d8d8]">
        <span>17 Layers</span>
        <div className="ml-auto flex items-center gap-[23px]">
          <button aria-label="Locate object"><svg width="22" height="21" fill="none" stroke="#737373" strokeWidth="2"><circle cx="14" cy="8" r="6.500" /><path d="M9 13L1 20" /></svg></button>
          <button aria-label="Make clipping mask"><svg width="22" height="21"><path d="M6 7H20V20H6Z" fill="#777" /><path d="M1.500 1.500H14.500V14.500H1.500Z" fill="#333" stroke="#c8c8c8" strokeWidth="2" /><path d="M7 7H14V14H7Z" fill="#ddd" /></svg></button>
          <button aria-label="Create new sublayer"><svg width="27" height="18"><path d="M12 2H26V17H20V9H12Z" fill={L} /><path d="M13 11L18 16V11Z" fill={L} /><path d="M1 1V7H9M6 4L9 7L6 10" fill="none" stroke={L} strokeWidth="2" /></svg></button>
          <button aria-label="Create new layer"><svg width="18" height="18"><path d="M1 1H17V17H10V8H1Z" fill={L} /><path d="M2 10L8 16V10Z" fill={L} /></svg></button>
          <button aria-label="Delete selection"><svg width="20" height="21" fill="none" stroke={L} strokeWidth="2"><path d="M0 5H20M6 4Q10 -1 14 4M3 8L5 20H15L17 8M8 8V18M12 8V18" /></svg></button>
        </div>
      </div>
    </section>
  );
}

function RightDock() {
  return (
    <aside className="flex w-[515px] shrink-0 flex-col border-l-4 border-[#262626] bg-[#484848]">
      <div className="flex h-[21px] shrink-0 items-center justify-between border-b border-[#262626] bg-[#303030] pr-[9px] pl-[45px]">
        <Chevrons label="Expand icons" />
        <Chevrons right label="Collapse panels" />
      </div>
      <div className="flex min-h-0 flex-1">
        <IconDock />
        <div className="flex min-w-0 flex-1 flex-col border-l-6 border-[#2a2a2a]">
          <NavigatorPanel />
          <div className="h-[6px] shrink-0 bg-[#262626]" />
          <Tabs tabs={["Image Trace"]} />
          <div className="h-[2px] w-[122px] shrink-0 bg-[#484848]" />
          <div className="h-[4px] shrink-0 bg-[#262626]" />
          <LayersPanel />
        </div>
      </div>
    </aside>
  );
}

export default function App() {
  return (
    <div className="flex h-screen flex-col bg-white py-[14px] font-['Open_Sans','Noto_Sans',sans-serif]">
      <div className="flex min-h-0 flex-1 flex-col border-t-2 border-l-3 border-t-[#1f1014] border-l-[#161616] bg-[#484848] pl-[6px]">
        <MenuBar />
        <ControlBar />
        <div className="flex min-h-0 flex-1">
          <ToolPanel />
          <DocumentArea />
          <RightDock />
        </div>
      </div>
    </div>
  );
}
